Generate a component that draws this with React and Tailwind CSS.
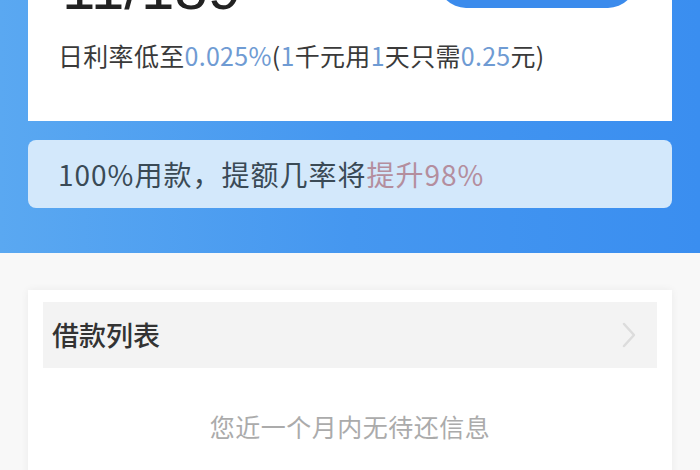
import React from "react";

const font = { fontFamily: '"Noto Sans CJK SC", "Noto Sans", sans-serif' };

export default function App() {
  return (
    <div className="w-[700px] h-[470px] overflow-hidden bg-[#f8f8f8]" style={font}>
      <div className="h-[253px] bg-gradient-to-r from-[#5aa8f1] via-[#4597f0] to-[#3a8ef0] px-[28px] pt-0">
        <div className="bg-white h-[121px] flex flex-col">
          <div className="-mt-[52px] flex items-end justify-between pl-[34px] pr-[36px] h-[60px]">
            <div className="text-[60px] leading-none text-[#222] font-medium translate-y-[11px]" style={{ fontFamily: '"Liberation Sans", sans-serif' }}>11/189</div>
            <div className="w-[198px] h-[56px] rounded-full bg-[#3b8bec]"></div>
          </div>
          <div className="mt-[35px] pl-[30px] text-[25px] leading-none text-[#3a3a3a] tracking-[0.3px]">
            日利率低至<span className="text-[#6f9bd3]">0.025%</span>(<span className="text-[#6f9bd3]">1</span>千元用<span className="text-[#6f9bd3]">1</span>天只需<span className="text-[#6f9bd3]">0.25</span>元)
          </div>
        </div>
        <div className="mt-[19px] h-[68px] rounded-[8px] bg-[#d3e8fb] flex items-center pl-[30px] text-[28px] text-[#3a4a56] tracking-[1px]">
          100%用款，提额几率将<span className="text-[#b48e9e]">提升98%</span>
        </div>
      </div>
      <div className="mx-[28px] mt-[37px] bg-white shadow-[0_0_8px_rgba(0,0,0,0.06)] px-[15px] pt-[12px] h-[200px]">
        <div className="h-[66px] bg-[#f3f3f3] flex items-center justify-between pl-[9px] pr-[20px]">
          <span className="text-[27px] text-[#333] font-medium">借款列表</span>
          <svg width="16" height="28" viewBox="0 0 16 28" fill="none">
            <path d="M3 3 L13 14 L3 25" stroke="#dcdcdc" strokeWidth="2.5" strokeLinecap="round" strokeLinejoin="round" />
          </svg>
        </div>
        <div className="mt-[40px] text-center text-[25px] text-[#ababab] tracking-[0.5px]">您近一个月内无待还信息</div>
      </div>
    </div>
  );
}
